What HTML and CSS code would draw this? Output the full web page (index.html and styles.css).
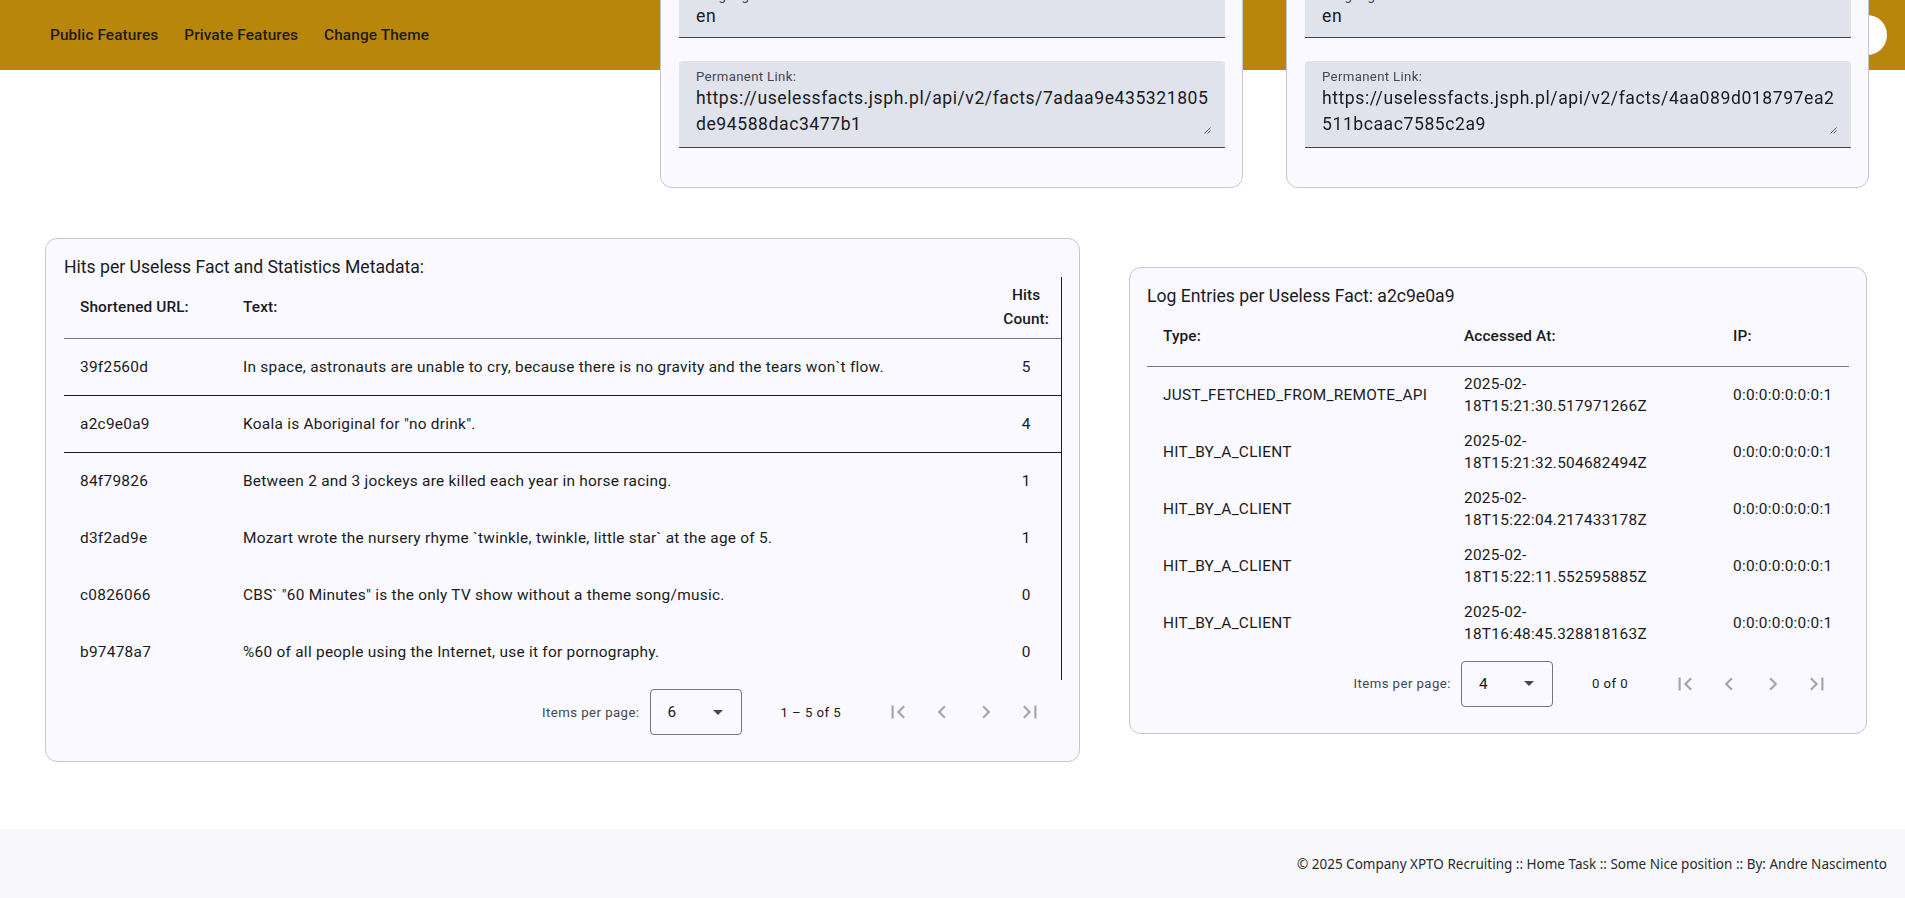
FILE: index.html
```html
<!DOCTYPE html>
<html lang="en">
<head>
<meta charset="utf-8">
<title>Useless Facts</title>
<link rel="stylesheet" href="styles.css">
</head>
<body>
<header class="topbar">
  <nav class="nav">
    <a class="nav-btn">Public Features</a>
    <a class="nav-btn">Private Features</a>
    <a class="nav-btn">Change Theme</a>
  </nav>
  <div class="avatar"></div>
</header>

<main class="page">
  <section class="facts-row">
    <div class="card fact-card">
      <div class="field field-tall">
        <div class="field-label">Text:</div>
        <div class="field-value multiline"><span class="line">Koala is Aboriginal for "no drink".</span></div>
      </div>
      <div class="field">
        <div class="field-label">Source:</div>
        <div class="field-value">djtech.net</div>
      </div>
      <div class="field">
        <div class="field-label">Language:</div>
        <div class="field-value">en</div>
      </div>
      <div class="field field-tall">
        <div class="field-label">Permanent Link:</div>
        <div class="field-value multiline"><span class="line">https://uselessfacts.jsph.pl/api/v2/facts/7adaa9e435321805</span><span class="line">de94588dac3477b1</span></div>
        <svg class="resize" width="7" height="7" viewBox="0 0 7 7"><path d="M6.5 0.5L0.5 6.5M6.5 3.5L3.5 6.5" stroke="#44474e" stroke-width="0.9"/></svg>
      </div>
    </div>
    <div class="card fact-card">
      <div class="field field-tall">
        <div class="field-label">Text:</div>
        <div class="field-value multiline"><span class="line">Mozart wrote the nursery rhyme `twinkle, twinkle, little star`</span><span class="line">at the age of 5.</span></div>
      </div>
      <div class="field">
        <div class="field-label">Source:</div>
        <div class="field-value">djtech.net</div>
      </div>
      <div class="field">
        <div class="field-label">Language:</div>
        <div class="field-value">en</div>
      </div>
      <div class="field field-tall">
        <div class="field-label">Permanent Link:</div>
        <div class="field-value multiline"><span class="line">https://uselessfacts.jsph.pl/api/v2/facts/4aa089d018797ea2</span><span class="line">511bcaac7585c2a9</span></div>
        <svg class="resize" width="7" height="7" viewBox="0 0 7 7"><path d="M6.5 0.5L0.5 6.5M6.5 3.5L3.5 6.5" stroke="#44474e" stroke-width="0.9"/></svg>
      </div>
    </div>
  </section>

  <section class="stats-row">
    <div class="card stats-card">
      <h2 class="card-title">Hits per Useless Fact and Statistics Metadata:</h2>
      <div class="table-wrap bordered">
        <table class="data-table hits-table">
          <thead>
            <tr>
              <th class="col-url">Shortened URL:</th>
              <th class="col-text">Text:</th>
              <th class="col-hits">Hits Count:</th>
            </tr>
          </thead>
          <tbody>
            <tr class="sep"><td>39f2560d</td><td>In space, astronauts are unable to cry, because there is no gravity and the tears won`t flow.</td><td class="num">5</td></tr>
            <tr class="sep"><td>a2c9e0a9</td><td>Koala is Aboriginal for "no drink".</td><td class="num">4</td></tr>
            <tr><td>84f79826</td><td>Between 2 and 3 jockeys are killed each year in horse racing.</td><td class="num">1</td></tr>
            <tr><td>d3f2ad9e</td><td>Mozart wrote the nursery rhyme `twinkle, twinkle, little star` at the age of 5.</td><td class="num">1</td></tr>
            <tr><td>c0826066</td><td>CBS` "60 Minutes" is the only TV show without a theme song/music.</td><td class="num">0</td></tr>
            <tr><td>b97478a7</td><td>%60 of all people using the Internet, use it for pornography.</td><td class="num">0</td></tr>
          </tbody>
        </table>
      </div>
      <div class="paginator">
        <span class="pg-label">Items per page:</span>
        <div class="pg-select"><span>6</span><span class="pg-arrow"></span></div>
        <span class="pg-range">1 – 5 of 5</span>
        <div class="pg-buttons">
          <span class="pg-btn"><svg viewBox="0 0 24 24"><path d="M18.41 16.59L13.82 12l4.59-4.59L17 6l-6 6 6 6zM6 6h2v12H6z"/></svg></span>
          <span class="pg-btn"><svg viewBox="0 0 24 24"><path d="M15.41 7.41L14 6l-6 6 6 6 1.41-1.41L10.83 12z"/></svg></span>
          <span class="pg-btn"><svg viewBox="0 0 24 24"><path d="M10 6L8.59 7.41 13.17 12l-4.58 4.59L10 18l6-6z"/></svg></span>
          <span class="pg-btn"><svg viewBox="0 0 24 24"><path d="M5.59 7.41L10.18 12l-4.59 4.59L7 18l6-6-6-6zM16 6h2v12h-2z"/></svg></span>
        </div>
      </div>
    </div>

    <div class="card log-card">
      <h2 class="card-title">Log Entries per Useless Fact: a2c9e0a9</h2>
      <div class="table-wrap">
        <table class="data-table log-table">
          <thead>
            <tr>
              <th class="col-type">Type:</th>
              <th class="col-at">Accessed At:</th>
              <th class="col-ip">IP:</th>
            </tr>
          </thead>
          <tbody>
            <tr><td>JUST_FETCHED_FROM_REMOTE_API</td><td><span class="stamp">2025-02-18T15:21:30.517971266Z</span></td><td>0:0:0:0:0:0:0:1</td></tr>
            <tr><td>HIT_BY_A_CLIENT</td><td><span class="stamp">2025-02-18T15:21:32.504682494Z</span></td><td>0:0:0:0:0:0:0:1</td></tr>
            <tr><td>HIT_BY_A_CLIENT</td><td><span class="stamp">2025-02-18T15:22:04.217433178Z</span></td><td>0:0:0:0:0:0:0:1</td></tr>
            <tr><td>HIT_BY_A_CLIENT</td><td><span class="stamp">2025-02-18T15:22:11.552595885Z</span></td><td>0:0:0:0:0:0:0:1</td></tr>
            <tr><td>HIT_BY_A_CLIENT</td><td><span class="stamp">2025-02-18T16:48:45.328818163Z</span></td><td>0:0:0:0:0:0:0:1</td></tr>
          </tbody>
        </table>
      </div>
      <div class="paginator">
        <span class="pg-label">Items per page:</span>
        <div class="pg-select"><span>4</span><span class="pg-arrow"></span></div>
        <span class="pg-range">0 of 0</span>
        <div class="pg-buttons">
          <span class="pg-btn"><svg viewBox="0 0 24 24"><path d="M18.41 16.59L13.82 12l4.59-4.59L17 6l-6 6 6 6zM6 6h2v12H6z"/></svg></span>
          <span class="pg-btn"><svg viewBox="0 0 24 24"><path d="M15.41 7.41L14 6l-6 6 6 6 1.41-1.41L10.83 12z"/></svg></span>
          <span class="pg-btn"><svg viewBox="0 0 24 24"><path d="M10 6L8.59 7.41 13.17 12l-4.58 4.59L10 18l6-6z"/></svg></span>
          <span class="pg-btn"><svg viewBox="0 0 24 24"><path d="M5.59 7.41L10.18 12l-4.59 4.59L7 18l6-6-6-6zM16 6h2v12h-2z"/></svg></span>
        </div>
      </div>
    </div>
  </section>
</main>

<footer class="footer">
  <span>© 2025 Company XPTO Recruiting :: Home Task :: Some Nice position :: By: Andre Nascimento</span>
</footer>
</body>
</html>
```

FILE: styles.css
```css
* { box-sizing: border-box; }

html, body {
  margin: 0;
  padding: 0;
}

body {
  font-family: Roboto, "Noto Sans", sans-serif;
  color: #1a1b20;
  background: #ffffff;
  height: 898px;
  overflow: hidden;
}

/* ---------- top bar ---------- */
.topbar {
  position: fixed;
  top: 0;
  left: 0;
  right: 0;
  height: 70px;
  background: #b8860b;
  display: flex;
  align-items: center;
  justify-content: space-between;
  padding: 0 18px 0 38px;
  z-index: 1;
}

.nav {
  display: flex;
  gap: 2px;
}

.nav-btn {
  font-size: 15.4px;
  font-weight: 500;
  color: #1f1b16;
  padding: 0 12px;
  line-height: 40px;
  letter-spacing: 0.1px;
  cursor: pointer;
}

.avatar {
  width: 40px;
  height: 40px;
  border-radius: 50%;
  background: #ffffff;
}

/* ---------- page ---------- */
.page {
  display: flex;
  flex-direction: column;
}

.card {
  position: relative;
  z-index: 2;
  background: #f9f9ff;
  border: 1px solid #c4c6d0;
  border-radius: 12px;
}

.facts-row {
  display: flex;
  gap: 43px;
  padding-left: 660px;
  margin-top: -226px;
}

.fact-card {
  width: 583px;
  padding: 18px 17px 39px 18px;
  display: flex;
  flex-direction: column;
  gap: 23px;
}

.field {
  position: relative;
  background: #e0e2ec;
  border-radius: 4px 4px 0 0;
  border-bottom: 1px solid #44474e;
  padding: 6px 17px 9px;
}

.field-label {
  font-size: 13.2px;
  line-height: 16px;
  color: #44474e;
  letter-spacing: 0.35px;
}

.field-value {
  font-size: 17.6px;
  line-height: 24px;
  color: #1a1b20;
  letter-spacing: 0.55px;
}

.field-tall {
  padding: 8px 17px 10px;
}

.field-value.multiline {
  line-height: 26px;
  height: 52px;
  overflow: hidden;
}

.field-value .line {
  display: block;
  white-space: nowrap;
}

.resize {
  position: absolute;
  right: 14px;
  bottom: 13px;
}

/* ---------- stats ---------- */
.stats-row {
  display: flex;
  align-items: center;
  gap: 49px;
  padding-left: 45px;
  margin-top: 50px;
}

.stats-card {
  width: 1035px;
  padding: 18px 17px 17px 18px;
}

.log-card {
  width: 738px;
  padding: 18px 17px 17px 17px;
}

.card-title {
  margin: 0;
  font-size: 17.6px;
  font-weight: 400;
  line-height: 20px;
  color: #1a1b20;
  letter-spacing: 0;
}

.table-wrap.bordered {
  border-right: 1px solid #1a1b20;
}

.data-table {
  width: 100%;
  border-collapse: collapse;
}

.data-table th {
  height: 61px;
  padding: 0 16px;
  text-align: left;
  font-size: 15.4px;
  font-weight: 500;
  line-height: 24px;
  letter-spacing: 0.11px;
  color: #1a1b20;
  border-bottom: 1px solid #75777f;
}

.data-table td {
  height: 57px;
  padding: 0 16px;
  font-size: 15.4px;
  line-height: 22px;
  color: #1a1b20;
  letter-spacing: 0.27px;
}

.hits-table .col-url { width: 163px; }
.hits-table .col-hits { width: 1px; text-align: center; padding-right: 12px; }
.hits-table td.num { text-align: center; padding-right: 12px; }
.hits-table tr.sep td { border-bottom: 1px solid #1a1b20; }

.log-table .col-type { width: 301px; }
.log-table .col-at { width: 269px; }

.stamp {
  display: block;
  max-width: 200px;
}

/* ---------- paginator ---------- */
.paginator {
  height: 64px;
  display: flex;
  align-items: center;
  justify-content: flex-end;
  padding-right: 10px;
  color: #44474e;
}

.pg-label {
  font-size: 13.2px;
  letter-spacing: 0.44px;
  margin-right: 10px;
}

.pg-select {
  width: 92px;
  height: 46px;
  border: 1px solid #75777f;
  border-radius: 4px;
  display: flex;
  align-items: center;
  justify-content: space-between;
  padding: 0 18px 0 17px;
  font-size: 15.4px;
  color: #1a1b20;
}

.pg-arrow {
  width: 0;
  height: 0;
  border-left: 5px solid transparent;
  border-right: 5px solid transparent;
  border-top: 5px solid #44474e;
}

.pg-range {
  font-size: 13.2px;
  letter-spacing: 0.44px;
  margin: 0 35px 0 39px;
  color: #1a1b20;
}

.pg-buttons {
  display: flex;
}

.pg-btn {
  width: 44px;
  height: 44px;
  display: flex;
  align-items: center;
  justify-content: center;
}

.pg-btn svg {
  width: 26px;
  height: 26px;
  fill: rgba(26, 27, 32, 0.38);
}

/* ---------- footer ---------- */
.footer {
  margin-top: 67px;
  height: 69px;
  background: #f8f8fc;
  display: flex;
  align-items: center;
  justify-content: flex-end;
  padding-right: 18px;
  font-family: "Noto Sans", "Open Sans", sans-serif;
  font-size: 13.5px;
  color: #2b2b2b;
}
```
